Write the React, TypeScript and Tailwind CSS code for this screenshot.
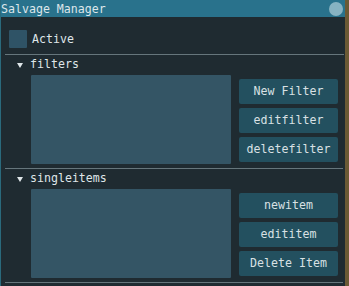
import React from 'react';

const font = { fontFamily: '"DejaVu Sans Mono", "Liberation Mono", monospace' };

function Arrow() {
  return (
    <svg width="6" height="5" viewBox="0 0 6 5" className="block">
      <polygon points="0,0 6,0 3,5" fill="#dfe6e9" />
    </svg>
  );
}

function Btn({ label }: { label: string }) {
  return (
    <div className="h-[25px] w-[99px] bg-[#23505f] rounded-[2px] flex items-center justify-center text-[#d9e1e4]">
      {label}
    </div>
  );
}

function Section({ title, buttons }: { title: string; buttons: string[] }) {
  return (
    <div className="flex flex-col">
      <div className="h-[20px] flex items-center pl-[17px]">
        <Arrow />
        <span className="ml-[7px] text-[#dfe6e9]">{title}</span>
      </div>
      <div className="flex pl-[31px]">
        <div className="w-[200px] h-[89px] bg-[#345565] rounded-[1px]" />
        <div className="ml-[8px] mt-[4px] flex flex-col gap-[4px]">
          {buttons.map(b => (
            <Btn key={b} label={b} />
          ))}
        </div>
      </div>
      <div className="mt-[4px] ml-[5px] mr-[1px] h-[1px] bg-[#66767c]" />
    </div>
  );
}

export default function App() {
  return (
    <div className="w-[349px] h-[286px] bg-[#6b5a35] flex overflow-hidden" style={font}>
      <div className="w-[345px] h-[286px] bg-[#1f2b31] border-l border-[#2a6a7c] flex flex-col text-[11.6px] leading-none">
        <div className="h-[17px] bg-[#29728c] flex items-center justify-between pr-[2px]">
          <span className="text-[#dde6ea] pt-[2px]">Salvage Manager</span>
          <div className="w-[14px] h-[14px] rounded-full bg-[#87b3c2]" />
        </div>
        <div className="flex flex-col pr-[1px]">
          <div className="mt-[13px] ml-[8px] flex items-center">
            <div className="w-[18px] h-[18px] bg-[#2f5366] rounded-[1px]" />
            <span className="ml-[5px] text-[#dfe6e9] pt-[1px]">Active</span>
          </div>
          <div className="mt-[6px] ml-[4px] h-[1px] bg-[#66767c]" />
          <div className="-ml-[1px]">
            <Section title="filters" buttons={['New Filter', 'editfilter', 'deletefilter']} />
            <Section title="singleitems" buttons={['newitem', 'edititem', 'Delete Item']} />
          </div>
        </div>
      </div>
    </div>
  );
}
